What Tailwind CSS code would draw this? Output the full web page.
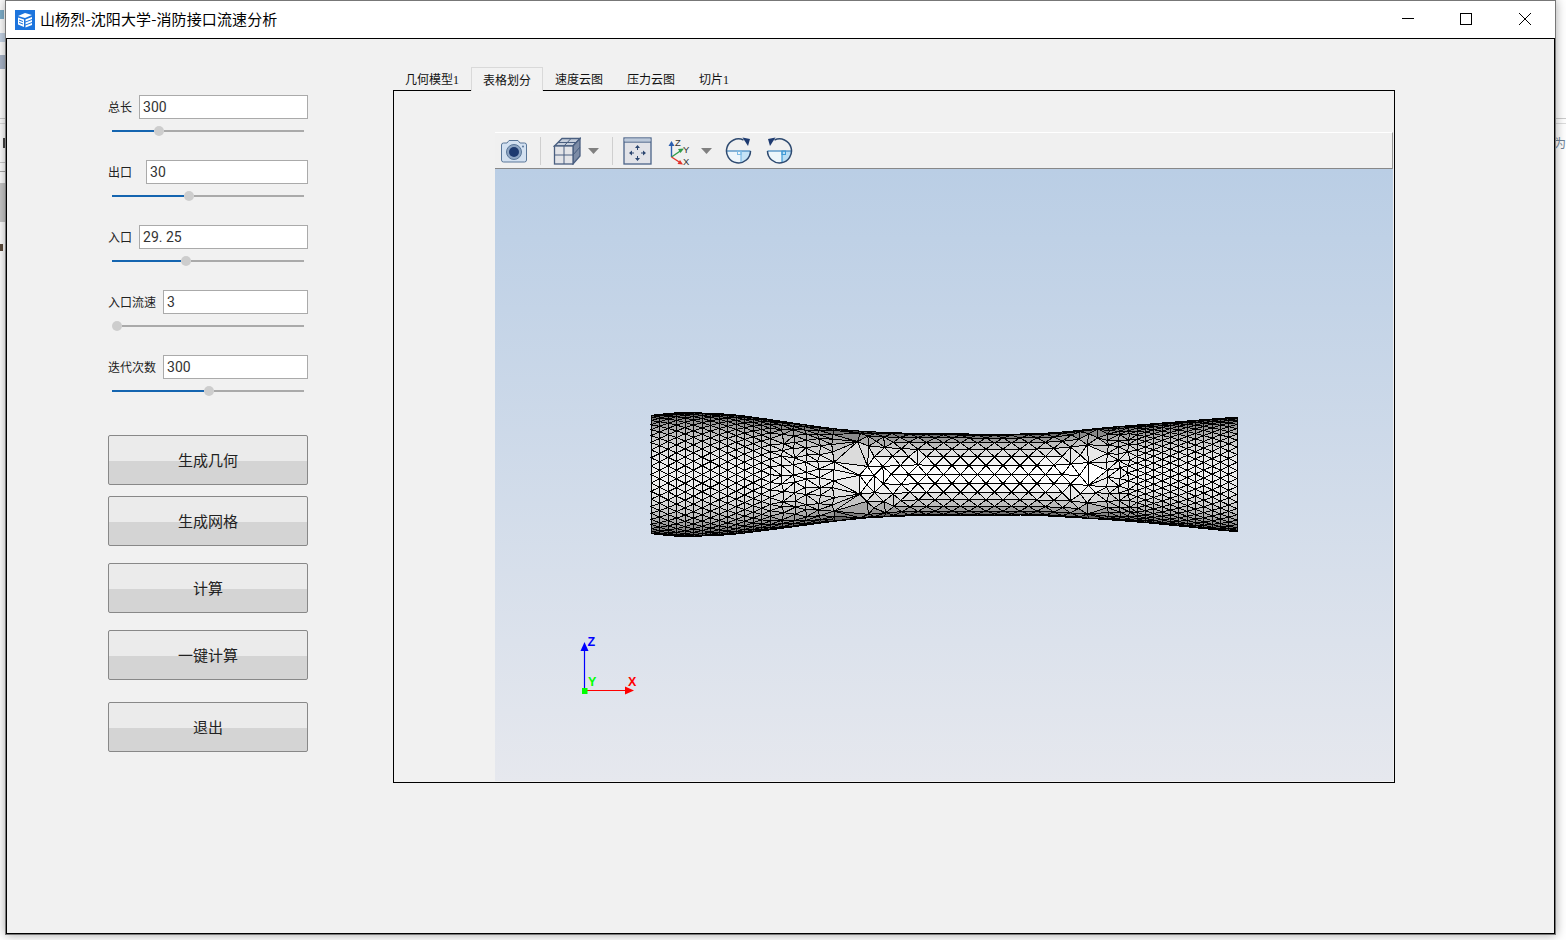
<!DOCTYPE html>
<html lang="zh-CN">
<head>
    <meta charset="UTF-8">
    <title>山杨烈-沈阳大学-消防接口流速分析</title>
    <script src="https://cdn.jsdelivr.net/npm/@tailwindcss/browser@4"></script>
</head>
<body class="relative w-[1566px] h-[940px] overflow-hidden bg-white font-['Noto_Sans_CJK_SC',sans-serif] text-black">

    <!-- Desktop scraps showing around the window -->
    <div class="absolute left-0 top-[10px] w-[4px] h-[9px] bg-[#7fb0cc]"></div>
    <div class="absolute left-0 top-[33px] w-[5px] h-[9px] bg-[#c5d4e6]"></div>
    <div class="absolute left-0 top-[55px] w-[5px] h-[14px] bg-[#a9b5c8]"></div>
    <div class="absolute left-0 top-[118px] w-[5px] h-px bg-[#ccc]"></div>
    <div class="absolute left-0 top-[123px] w-[5px] h-px bg-[#ddd]"></div>
    <div class="absolute left-[3px] top-[138px] w-[3px] h-[10px] bg-[#444]"></div>
    <div class="absolute left-0 top-[162px] w-[5px] h-px bg-[#ccc]"></div>
    <div class="absolute left-0 top-[171px] w-[5px] h-px bg-[#aaa]"></div>
    <div class="absolute left-0 top-[183px] w-[5px] h-[39px] bg-[#c8c8c8]"></div>
    <div class="absolute left-0 top-[244px] w-[3px] h-[7px] bg-[#5b4a3a]"></div>
    <div class="absolute left-[1556px] top-[118px] w-[10px] h-px bg-[#ccc]"></div>
    <div class="absolute left-[1556px] top-[123px] w-[10px] h-px bg-[#ddd]"></div>
    <div class="absolute left-[1554px] top-[135px] text-[12px] leading-[16px] text-[#6d7f95]">为</div>

    <!-- Application window -->
    <div class="absolute left-[5px] top-0 w-[1551px] h-[935px] flex flex-col border border-[#777] shadow-[0_0_10px_rgba(0,0,0,0.35)]">
        <div class="h-[37px] shrink-0 bg-white flex items-center">
            <svg class="ml-[9px] mt-[1px]" width="20" height="20" viewBox="0 0 20 20">
                <rect width="20" height="20" fill="#1c74dd"/>
                <path d="M3 6 L10 3 L17 5 L10 8 Z M3 7.5 L9 9.5 V17 L3 14.5 Z M10.5 9.5 L17 7 V9 L10.5 11.5 Z M10.5 12.5 L17 10 V12 L10.5 14.5 Z M10.5 15.5 L17 13 V15 L10.5 17.5 Z" fill="#fff"/>
                <path d="M4 10 L8 11.5 M4 12.5 L8 14" stroke="#1c74dd"/>
            </svg>
            <span class="ml-[5px] mb-[2px] text-[15px] leading-[20px] tracking-[0.12px]">山杨烈-沈阳大学-消防接口流速分析</span>
            <div class="ml-auto flex mr-[1px] pb-[2px]">
                <div class="w-[58px] h-[34px] flex items-center justify-center"><svg width="14" height="14" viewBox="0 0 14 14"><path d="M1 6.5 H13" stroke="#000"/></svg></div>
                <div class="w-[58px] h-[34px] flex items-center justify-center"><svg width="14" height="14" viewBox="0 0 14 14"><rect x="1.5" y="1.5" width="11" height="11" fill="none" stroke="#000"/></svg></div>
                <div class="w-[59px] h-[34px] flex items-center justify-center"><svg width="14" height="14" viewBox="0 0 14 14"><path d="M1 1 L13 13 M13 1 L1 13" stroke="#000"/></svg></div>
            </div>
        </div>

        <div class="flex-1 min-h-0 flex border border-black bg-[#f1f1f1]">
            <!-- Parameters -->
            <div class="ml-[101px] mt-[56px] w-[200px] shrink-0 flex flex-col">
                <div class="flex items-center h-[24px]">
                    <span class="text-[12px] text-[#222]">总长</span>
                    <input class="ml-[7px] flex-1 min-w-0 h-full bg-white border border-[#aaa] pl-[3px] font-['Roboto',sans-serif] text-[14px] text-[#333]" value="300">
                </div>
                <div class="ml-[4px] w-[192px] h-[24px] flex items-center mb-[17px]">
                    <div class="w-[42px] h-[2px] bg-[#1565b0]"></div>
                    <div class="size-[10px] rounded-full bg-[#cdcdcd]"></div>
                    <div class="flex-1 h-[2px] bg-[#aaa]"></div>
                </div>

                <div class="flex items-center h-[24px]">
                    <span class="text-[12px] text-[#222]">出口</span>
                    <input class="ml-[14px] flex-1 min-w-0 h-full bg-white border border-[#aaa] pl-[3px] font-['Roboto',sans-serif] text-[14px] text-[#333]" value="30">
                </div>
                <div class="ml-[4px] w-[192px] h-[24px] flex items-center mb-[17px]">
                    <div class="w-[72px] h-[2px] bg-[#1565b0]"></div>
                    <div class="size-[10px] rounded-full bg-[#cdcdcd]"></div>
                    <div class="flex-1 h-[2px] bg-[#aaa]"></div>
                </div>

                <div class="flex items-center h-[24px]">
                    <span class="text-[12px] text-[#222]">入口</span>
                    <input class="ml-[7px] flex-1 min-w-0 h-full bg-white border border-[#aaa] pl-[3px] font-['Roboto',sans-serif] text-[14px] text-[#333]" value="29. 25">
                </div>
                <div class="ml-[4px] w-[192px] h-[24px] flex items-center mb-[17px]">
                    <div class="w-[69px] h-[2px] bg-[#1565b0]"></div>
                    <div class="size-[10px] rounded-full bg-[#cdcdcd]"></div>
                    <div class="flex-1 h-[2px] bg-[#aaa]"></div>
                </div>

                <div class="flex items-center h-[24px]">
                    <span class="text-[12px] text-[#222]">入口流速</span>
                    <input class="ml-[7px] flex-1 min-w-0 h-full bg-white border border-[#aaa] pl-[3px] font-['Roboto',sans-serif] text-[14px] text-[#333]" value="3">
                </div>
                <div class="ml-[4px] w-[192px] h-[24px] flex items-center mb-[17px]">
                    <div class="size-[10px] rounded-full bg-[#cdcdcd]"></div>
                    <div class="flex-1 h-[2px] bg-[#aaa]"></div>
                </div>

                <div class="flex items-center h-[24px]">
                    <span class="text-[12px] text-[#222]">迭代次数</span>
                    <input class="ml-[7px] flex-1 min-w-0 h-full bg-white border border-[#aaa] pl-[3px] font-['Roboto',sans-serif] text-[14px] text-[#333]" value="300">
                </div>
                <div class="ml-[4px] w-[192px] h-[24px] flex items-center">
                    <div class="w-[92px] h-[2px] bg-[#1565b0]"></div>
                    <div class="size-[10px] rounded-full bg-[#cdcdcd]"></div>
                    <div class="flex-1 h-[2px] bg-[#aaa]"></div>
                </div>

                <button class="mt-[32px] h-[50px] rounded-[2px] border border-[#888] bg-[linear-gradient(#ebebeb_52%,#d4d4d4_52%)] text-[15px] text-[#222]">生成几何</button>
                <button class="mt-[11px] h-[50px] rounded-[2px] border border-[#888] bg-[linear-gradient(#ebebeb_52%,#d4d4d4_52%)] text-[15px] text-[#222]">生成网格</button>
                <button class="mt-[17px] h-[50px] rounded-[2px] border border-[#888] bg-[linear-gradient(#ebebeb_52%,#d4d4d4_52%)] text-[15px] text-[#222]">计算</button>
                <button class="mt-[17px] h-[50px] rounded-[2px] border border-[#888] bg-[linear-gradient(#ebebeb_52%,#d4d4d4_52%)] text-[15px] text-[#222]">一键计算</button>
                <button class="mt-[22px] h-[50px] rounded-[2px] border border-[#888] bg-[linear-gradient(#ebebeb_52%,#d4d4d4_52%)] text-[15px] text-[#222]">退出</button>
            </div>

            <!-- Tabs and viewer -->
            <div class="ml-[85px] mt-[27px] w-[1002px] shrink-0 flex flex-col font-['Liberation_Serif','Noto_Sans_CJK_SC',serif]">
                <div class="flex h-[24px] items-end text-[12px] text-[#111]">
                    <div class="px-3 h-[22px] leading-[24px]">几何模型1</div>
                    <div class="px-[11px] h-[24px] leading-[26px] bg-[#f2f2f2] border border-b-0 border-[#d9d9d9] relative z-10 translate-y-px">表格划分</div>
                    <div class="px-3 h-[22px] leading-[24px]">速度云图</div>
                    <div class="px-3 h-[22px] leading-[24px]">压力云图</div>
                    <div class="px-3 h-[22px] leading-[24px]">切片1</div>
                </div>
                <div class="h-[693px] border border-black bg-[#f1f1f1] pl-[101px] pt-[41px]">
                    <div class="w-[898px] h-[37px] flex items-center bg-[#f0f0f0] border-t border-t-white border-b border-b-[#888] border-r border-r-[#999] pl-[5px]">
                        <svg width="28" height="24" viewBox="0 0 28 24">
                            <path d="M1.5 6 Q1.5 4 3.5 4 H7 L9 1.5 H18 L20 4 H24.5 Q26.5 4 26.5 6 V21 Q26.5 23 24.5 23 H3.5 Q1.5 23 1.5 21 Z" fill="#d3e1f1" stroke="#5a7799"/>
                            <circle cx="14" cy="13" r="7.5" fill="#8ea6c4" stroke="#5a7799"/>
                            <circle cx="14" cy="13" r="5" fill="#1d3a70"/>
                            <circle cx="23" cy="7.5" r="1" fill="#5a7799"/>
                        </svg>
                        <div class="ml-[12px] w-px h-[28px] bg-[#cfcfcf]"></div>
                        <svg class="ml-[12px]" width="28" height="28" viewBox="0 0 28 28">
                            <path d="M1.5 9 L9 1.5 H27 L20 9 Z" fill="#c6cedb" stroke="#4a5f80" stroke-width="1.3"/>
                            <path d="M20 9 L27 1.5 V19 L20 27 Z" fill="#7d8ca6" stroke="#4a5f80" stroke-width="1.3"/>
                            <rect x="1.5" y="9" width="18.5" height="18" fill="#e3e4e8" stroke="#4a5f80" stroke-width="1.3"/>
                            <path d="M1.5 18 H20 L27 10 M11 9 V27 M5 5.5 H23.5 M11 9 L18 1.5" fill="none" stroke="#4a5f80"/>
                        </svg>
                        <svg class="ml-[7px]" width="11" height="6" viewBox="0 0 11 6"><path d="M0 0 H11 L5.5 6 Z" fill="#808080"/></svg>
                        <div class="ml-[13px] w-px h-[28px] bg-[#cfcfcf]"></div>
                        <svg class="ml-[10px]" width="29" height="28" viewBox="0 0 29 28">
                            <rect x="1" y="1" width="27" height="26" fill="#e2e3e8" stroke="#4a6388" stroke-width="1.3"/>
                            <path d="M1 5 H28" stroke="#4a6388" stroke-width="1.3"/>
                            <path d="M1.5 1.5 H27.5 V4.5 H1.5 Z" fill="#bcc9da"/>
                            <path d="M14.5 8 L12 11 H17 Z M14.5 24 L12 21 H17 Z M6 16 L9 13.5 V18.5 Z M23 16 L20 13.5 V18.5 Z" fill="#2c4670"/>
                            <path d="M14.5 11 V13 M14.5 19 V21 M9 16 H11 M18 16 H20" stroke="#2c4670"/>
                        </svg>
                        <svg class="ml-[15px]" width="24" height="28" viewBox="0 0 24 28">
                            <path d="M4.5 20 V7" stroke="#2b5fb0" stroke-width="1.4"/>
                            <path d="M4.5 4 L1.5 9 H7.5 Z" fill="#2b5fb0"/>
                            <path d="M4.5 20 L14 13.5" stroke="#2f9c4a" stroke-width="1.4"/>
                            <path d="M17 11.5 L11 12 L13.5 16 Z" fill="#2f9c4a"/>
                            <path d="M4.5 20 L13 25.5" stroke="#e2332c" stroke-width="1.4"/>
                            <path d="M16 27.5 L10.5 27 L13 23 Z" fill="#e2332c"/>
                            <text x="8" y="9" font-family="Liberation Sans" font-size="9.5" fill="#333">Z</text>
                            <text x="16" y="16" font-family="Liberation Sans" font-size="9.5" fill="#333">Y</text>
                            <text x="16" y="27.5" font-family="Liberation Sans" font-size="9.5" fill="#333">X</text>
                        </svg>
                        <svg class="ml-[10px]" width="11" height="6" viewBox="0 0 11 6"><path d="M0 0 H11 L5.5 6 Z" fill="#808080"/></svg>
                        <svg class="ml-[13px]" width="27" height="27" viewBox="0 0 27 27">
                            <path d="M1.5 14 A12 12 0 0 0 25.5 14 Z" fill="#c4e3f6"/>
                            <path d="M16 14 H1.5 A12 12 0 0 0 16 25.8 Z" fill="#eef6fb"/>
                            <path d="M1.5 14 H25.5" stroke="#3f86c0" stroke-width="1.2"/>
                            <path d="M16 14 V25.5" stroke="#7dbbe6" stroke-width="1.2"/>
                            <rect x="12.5" y="14" width="3.5" height="3.5" fill="none" stroke="#7dbbe6"/>
                            <path d="M25.5 14 A12 12 0 1 1 18.5 3" fill="none" stroke="#2e4a70" stroke-width="1.5"/>
                            <path d="M17.5 0.5 L25 2 L23 9 Z" fill="#1d3a70"/>
                        </svg>
                        <svg class="ml-[14px]" width="27" height="27" viewBox="0 0 27 27">
                            <path d="M1.5 14 A12 12 0 0 0 25.5 14 Z" fill="#eef6fb"/>
                            <path d="M16 14 H25.5 A12 12 0 0 1 16 25.8 Z" fill="#b9def5"/>
                            <path d="M1.5 14 H25.5" stroke="#3f86c0" stroke-width="1.2"/>
                            <path d="M16 14 V25.5" stroke="#3f9ad6" stroke-width="1.2"/>
                            <rect x="16" y="14" width="3.5" height="3.5" fill="none" stroke="#3f9ad6"/>
                            <path d="M1.5 14 A12 12 0 1 0 8.5 3" fill="none" stroke="#2e4a70" stroke-width="1.5"/>
                            <path d="M9.5 0.5 L2 2 L4 9 Z" fill="#1d3a70"/>
                        </svg>
                    </div>
                    <div class="relative w-[898px] h-[612px] bg-linear-to-b from-[#bacee5] to-[#e6e8ee]">
                        <svg id="scene" class="absolute inset-0" width="898" height="612" viewBox="495 169 898 612">
                            <g id="mesh"></g>
                            <path d="M584.5 690 V648" stroke="#0000ff" stroke-width="1.2"/>
                            <path d="M584.5 642 L580.5 651 H588.5 Z" fill="#0000ff"/>
                            <path d="M585 690.5 H626" stroke="#ff0000" stroke-width="1.2"/>
                            <path d="M634 690.5 L625 686.5 V694.5 Z" fill="#ff0000"/>
                            <rect x="582" y="688" width="5.5" height="6" fill="#00ff00"/>
                            <text x="587.5" y="645.5" font-family="Liberation Sans" font-weight="700" font-size="12.5" fill="#0000ff">Z</text>
                            <text x="588" y="685.5" font-family="Liberation Sans" font-weight="700" font-size="12.5" fill="#00ff00">Y</text>
                            <text x="628" y="685.5" font-family="Liberation Sans" font-weight="700" font-size="12.5" fill="#ff0000">X</text>
                        </svg>
                    </div>
                </div>
            </div>
        </div>
    </div>

    <script>
        // Silhouette of the pipe, [x, y] along the top and bottom edges
        const topEdge = [[651, 416], [675, 412], [730, 414], [760, 418], [800, 424], [850, 431], [900, 433], [950, 434], [1035, 434], [1065, 432], [1100, 428], [1150, 424], [1237, 417]];
        const bottomEdge = [[651, 533], [675, 537], [730, 535], [800, 526], [850, 519], [900, 516], [950, 515], [1035, 515], [1065, 517], [1100, 519], [1150, 523], [1237, 532]];

        function rawEdge(edge, x) {
            for (let i = 1; i < edge.length; i++) {
                if (x <= edge[i][0]) {
                    const t = (x - edge[i - 1][0]) / (edge[i][0] - edge[i - 1][0]);
                    return edge[i - 1][1] + (edge[i][1] - edge[i - 1][1]) * t;
                }
            }
            return edge[edge.length - 1][1];
        }

        // Average over a short window so the knots don't show as kinks
        function edgeAt(edge, x) {
            let sum = 0;
            for (let d = -16; d <= 16; d += 4) {
                sum += rawEdge(edge, Math.max(651, Math.min(1237, x + d)));
            }
            return sum / 9;
        }

        // Fixed seed so every load draws the same mesh
        let seed = 12345;
        function rand() {
            seed = (seed * 16807) % 2147483647;
            return seed / 2147483647;
        }

        const HALF = 63;
        const points = [];

        function addColumn(x, rows, odd, jitter) {
            const step = 2 * HALF / rows;
            points.push([x, -HALF], [x, HALF]);
            for (let k = odd ? 0 : 1; k < rows; k++) {
                const u = -HALF + step * k + (odd ? step / 2 : 0);
                if (Math.abs(u) < HALF - 1) {
                    points.push([x + (rand() - 0.5) * jitter + 0.001 * rand(), u + (rand() - 0.5) * jitter + 0.001 * rand()]);
                }
            }
        }

        let col = 0;
        for (let x = 651; x < 775; x += 8.5) addColumn(x, 22, col++ % 2 === 1, 0);
        for (let x = 783, s = 11; x < 845; x += s, s += 1) addColumn(x, Math.round(19 - (x - 783) / 18), col++ % 2 === 1, 3);
        // Middle of the pipe has staggered rows; they loosen up towards both ends
        for (let j = 0; j <= 14; j++) {
            const from = 852 + rand() * 8, to = 1100 - rand() * 8;
            for (let x = 850 + (j % 2) * 8.5; x < to; x += 17) {
                if (x < from) continue;
                const loose = Math.max(930 - x, x - 1050, 0) / 70 * 6;
                const edgeRow = j === 0 || j === 14;
                points.push([x + (rand() - 0.5) * loose + 0.001 * rand(), -HALF + j * 9 + (edgeRow ? 0 : (rand() - 0.5) * loose + 0.001 * rand())]);
            }
        }
        for (let x = 1108, s = 11; x < 1132; x += s, s -= 1) addColumn(x, Math.round(17 + (x - 1108) / 8), col++ % 2 === 1, 3);
        for (let x = 1137; x <= 1237.1; x += 8.34) addColumn(Math.min(x, 1237), 22, col++ % 2 === 1, 0);

        // Delaunay triangulation (Bowyer-Watson) in the unrolled x / u plane
        function circle(a, b, c) {
            const d = 2 * (a[0] * (b[1] - c[1]) + b[0] * (c[1] - a[1]) + c[0] * (a[1] - b[1]));
            const aa = a[0] * a[0] + a[1] * a[1], bb = b[0] * b[0] + b[1] * b[1], cc = c[0] * c[0] + c[1] * c[1];
            const x = (aa * (b[1] - c[1]) + bb * (c[1] - a[1]) + cc * (a[1] - b[1])) / d;
            const y = (aa * (c[0] - b[0]) + bb * (a[0] - c[0]) + cc * (b[0] - a[0])) / d;
            return { x, y, r: (a[0] - x) ** 2 + (a[1] - y) ** 2 };
        }

        function triangulate(pts) {
            const all = pts.concat([[-20000, -20000], [30000, -20000], [900, 40000]]);
            const n = pts.length;
            const makeTri = (a, b, c) => ({ v: [a, b, c], c: circle(all[a], all[b], all[c]) });
            let tris = [makeTri(n, n + 1, n + 2)];
            for (let i = 0; i < n; i++) {
                const p = all[i];
                const keep = [], edges = new Map();
                for (const t of tris) {
                    if ((p[0] - t.c.x) ** 2 + (p[1] - t.c.y) ** 2 < t.c.r) {
                        for (let e = 0; e < 3; e++) {
                            const a = t.v[e], b = t.v[(e + 1) % 3];
                            const key = a < b ? a + '_' + b : b + '_' + a;
                            edges.set(key, edges.has(key) ? null : [a, b]);
                        }
                    } else {
                        keep.push(t);
                    }
                }
                for (const e of edges.values()) {
                    if (e) keep.push(makeTri(e[0], e[1], i));
                }
                tris = keep;
            }
            return tris.filter(t => t.v.every(i => i < n)).map(t => t.v);
        }

        function project(p) {
            const theta = p[1] / HALF * Math.PI / 2;
            const top = edgeAt(topEdge, p[0]), bottom = edgeAt(bottomEdge, p[0]);
            return [p[0], (top + bottom) / 2 + (bottom - top) / 2 * Math.sin(theta)];
        }

        let svg = '';
        for (const tri of triangulate(points)) {
            const a = points[tri[0]], b = points[tri[1]], c = points[tri[2]];
            const area = Math.abs((b[0] - a[0]) * (c[1] - a[1]) - (c[0] - a[0]) * (b[1] - a[1]));
            if (area < 0.5) continue;
            const cx = (a[0] + b[0] + c[0]) / 3, cu = (a[1] + b[1] + c[1]) / 3;
            const peak = cx > 860 && cx < 1100 ? 255 : 238;
            const g = Math.round(60 + (peak - 60) * Math.cos(cu / HALF * Math.PI / 2) ** 1.1);
            const pts = [a, b, c].map(project).map(p => p[0].toFixed(1) + ',' + p[1].toFixed(1)).join(' ');
            svg += `<polygon points="${pts}" fill="rgb(${g},${g},${g})" stroke="#000" stroke-width="1" shape-rendering="crispEdges"/>`;
        }
        document.getElementById('mesh').innerHTML = svg;
    </script>
</body>
</html>
